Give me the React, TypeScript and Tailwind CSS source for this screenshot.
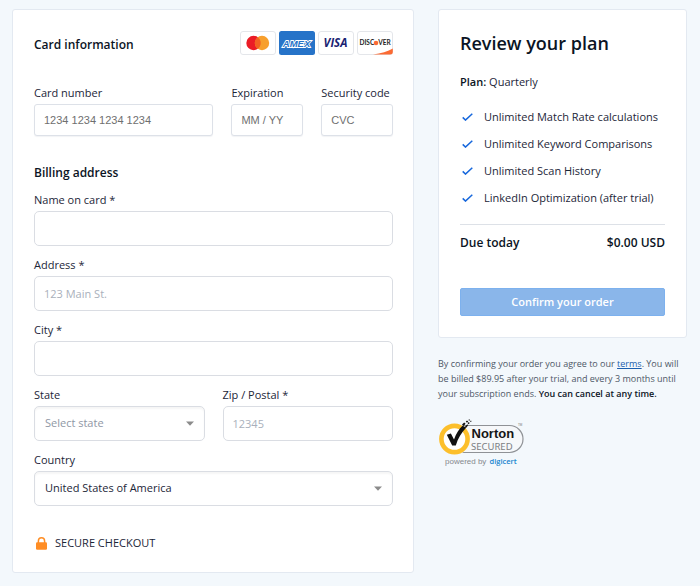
import { useState, type FormEvent, type ReactNode } from 'react';

/**
 * Checkout page: card + billing form on the left, plan summary on the right.
 */

const FEATURES = [
  'Unlimited Match Rate calculations',
  'Unlimited Keyword Comparisons',
  'Unlimited Scan History',
  'LinkedIn Optimization (after trial)',
];

const STATES = ['California', 'Florida', 'New York', 'Texas', 'Washington'];
const COUNTRIES = ['United States of America', 'Canada', 'United Kingdom'];

const cardField =
  'h-8 w-full rounded-[3px] border border-[#dde1e8] bg-white px-[9px] font-["Liberation_Sans",Arial,sans-serif] text-[11px] text-[#1c2638] shadow-[0_1px_1px_rgba(30,50,90,0.06)] outline-none placeholder:text-[#6f6f6f] focus:border-[#4a90e2]';
const billingField =
  'h-[35px] w-full rounded-[5px] border border-[#dadde3] bg-white px-[9px] text-[11px] text-[#1c2638] outline-none placeholder:text-[#a9b0bb] focus:border-[#4a90e2]';

function Field({ id, label, children }: { id: string; label: string; children: ReactNode }) {
  return (
    <div className="min-w-0">
      <label htmlFor={id} className="mb-[3px] block text-[11px] leading-4 text-[#1c2638]">
        {label}
      </label>
      {children}
    </div>
  );
}

function SelectField({
  id,
  label,
  value,
  placeholder,
  options,
  onChange,
}: {
  id: string;
  label: string;
  value: string;
  placeholder?: string;
  options: string[];
  onChange: (v: string) => void;
}) {
  return (
    <Field id={id} label={label}>
      <div className="relative">
        <select
          id={id}
          value={value}
          onChange={(e) => onChange(e.target.value)}
          className={`h-[35px] w-full appearance-none rounded-[5px] border border-[#dadde3] bg-white px-[10px] text-[11px] shadow-[inset_0_2px_2px_rgba(0,0,0,0.04)] outline-none focus:border-[#4a90e2] ${
            value ? 'text-[#1c2638]' : 'text-[#8f97a5]'
          }`}
        >
          {placeholder && <option value="">{placeholder}</option>}
          {options.map((o) => (
            <option key={o} value={o}>
              {o}
            </option>
          ))}
        </select>
        <svg
          width="8"
          height="5"
          viewBox="0 0 8 5"
          className="pointer-events-none absolute top-[15px] right-[11px]"
          aria-hidden="true"
        >
          <path d="M0 0.5H8L4 4.7Z" fill="#8b8b8b" />
        </svg>
      </div>
    </Field>
  );
}

function CardBrands() {
  return (
    <div className="flex gap-[3px]">
      <svg width="36" height="24" viewBox="0 0 36 24" role="img" aria-label="Mastercard">
        <rect x="0.5" y="0.5" width="35" height="23" rx="2.5" fill="#fff" stroke="#e4e6ea" />
        <circle cx="13.5" cy="12" r="7.2" fill="#eb1c26" />
        <circle cx="22" cy="12" r="7.2" fill="#f79f2d" />
        <path d="M17.75 6.2A7.2 7.2 0 0 1 17.75 17.8A7.2 7.2 0 0 1 17.75 6.2Z" fill="#f26122" />
      </svg>
      <svg width="36" height="24" viewBox="0 0 36 24" role="img" aria-label="American Express">
        <rect width="36" height="24" rx="2.5" fill="#2673c8" />
        <text
          x="17.5"
          y="15.5"
          textAnchor="middle"
          fontFamily="Liberation Sans, Arial, sans-serif"
          fontSize="9.5"
          fontWeight="700"
          fontStyle="italic"
          fill="#2673c8"
          stroke="#fff"
          strokeWidth="1.8"
          paintOrder="stroke"
        >
          AMEX
        </text>
      </svg>
      <svg width="36" height="24" viewBox="0 0 36 24" role="img" aria-label="Visa">
        <rect x="0.5" y="0.5" width="35" height="23" rx="2.5" fill="#fff" stroke="#e4e6ea" />
        <text
          x="17.5"
          y="16"
          textAnchor="middle"
          fontFamily="Open Sans, sans-serif"
          fontSize="11.5"
          fontWeight="700"
          fontStyle="italic"
          fill="#1a2272"
        >
          VISA
        </text>
      </svg>
      <svg width="36" height="24" viewBox="0 0 36 24" role="img" aria-label="Discover">
        <rect x="0.5" y="0.5" width="35" height="23" rx="2.5" fill="#fff" stroke="#e4e6ea" />
        <path d="M16 23.5C24 22.4 31 20.5 35.8 17.5V21Q35.8 23.5 33 23.5Z" fill="#fb6a33" />
        <g fontFamily="Lato, sans-serif" fontSize="6.5" fontWeight="700" fill="#1d1d1d">
          <text x="2.5" y="14.3">
            DISC
          </text>
          <text x="21.2" y="14.3">
            VER
          </text>
        </g>
        <circle cx="19" cy="12" r="2.3" fill="#fb6a33" />
      </svg>
    </div>
  );
}

function NortonSeal() {
  return (
    <svg width="86" height="48" viewBox="0 0 86 48" role="img" aria-label="Norton Secured, powered by digicert">
      <path
        d="M20 6.5H71.5A13.5 13.5 0 0 1 71.5 33.5H20"
        fill="#f6f8fa"
        stroke="#8f9296"
        strokeWidth="1.2"
      />
      <circle cx="16.5" cy="20" r="15.8" fill="#f3f8fc" />
      <circle cx="16.5" cy="20" r="13.1" fill="#fff" stroke="#fcbf2b" strokeWidth="4.6" />
      <path
        d="M8.8 15.8L12.9 14.6L16 20.4C18.2 14.6 20.8 10.4 24.5 6.8L28.3 8.4C23.4 13.6 20 19 17.8 26.4H14.2Z"
        fill="#111"
      />
      <path
        d="M24 5.6L26.2 3.4L27.6 4.8L25.6 7.1ZM27 7.6L29.4 5.2L30 6.6L28.2 8.8ZM27.8 2.6L29 1.4L30.2 2.6L29 3.8ZM29.6 4L31 3L31.6 4.2L30.4 5.2ZM30.4 1L31.2 0.2L32 1L31.2 1.8ZM32 2.2L33 1.4L33.6 2.3L32.8 3Z"
        fill="#111"
      />
      <text x="33.5" y="19" fontFamily="Liberation Sans, Arial, sans-serif" fontSize="13" fontWeight="700" fill="#151515">
        Norton
      </text>
      <text x="33" y="30.5" fontFamily="Noto Sans, sans-serif" fontSize="9.5" fill="#7b7e82">
        SECURED
      </text>
      <text x="80" y="7" fontFamily="Liberation Sans, Arial, sans-serif" fontSize="3" fill="#777">
        TM
      </text>
      <text x="7" y="44.5" fontFamily="Liberation Sans, Arial, sans-serif" fontSize="8" fill="#85898e">
        powered by
      </text>
      <text x="51.5" y="44.5" fontFamily="Open Sans, sans-serif" fontSize="7.5" fontWeight="600" fill="#1a86cf">
        digicert
      </text>
    </svg>
  );
}

export default function App() {
  const [state, setState] = useState('');
  const [country, setCountry] = useState(COUNTRIES[0]);

  function handleSubmit(e: FormEvent<HTMLFormElement>) {
    e.preventDefault();
  }

  return (
    <main className="min-h-screen bg-[#f3f8fc] font-['Open_Sans','Noto_Sans',sans-serif] text-[#1c2638]">
      <form
        onSubmit={handleSubmit}
        className="grid grid-cols-[minmax(0,1fr)_249px] items-start gap-6 pt-[9px] pr-[13px] pb-[13px] pl-3"
      >
        <section className="rounded-[3px] border border-[#e3e9f1] bg-white pt-[21px] pr-5 pb-5 pl-[21px]">
          <div className="flex items-end justify-between">
            <h2 className="text-[12px] leading-5 font-semibold text-[#0b1424]">Card information</h2>
            <CardBrands />
          </div>

          <div className="mt-[30px] grid grid-cols-[minmax(0,5fr)_minmax(0,2fr)_minmax(0,2fr)] gap-[18px]">
            <Field id="card" label="Card number">
              <input id="card" type="text" placeholder="1234 1234 1234 1234" className={cardField} />
            </Field>
            <Field id="exp" label="Expiration">
              <input id="exp" type="text" placeholder="MM / YY" className={cardField} />
            </Field>
            <Field id="cvc" label="Security code">
              <input id="cvc" type="text" placeholder="CVC" className={cardField} />
            </Field>
          </div>

          <h2 className="mt-[27px] text-[12px] leading-5 font-semibold text-[#0b1424]">Billing address</h2>

          <div className="mt-[9px] flex flex-col gap-[11px]">
            <Field id="name" label="Name on card *">
              <input id="name" type="text" className={billingField} />
            </Field>
            <Field id="address" label="Address *">
              <input id="address" type="text" placeholder="123 Main St." className={billingField} />
            </Field>
            <Field id="city" label="City *">
              <input id="city" type="text" className={billingField} />
            </Field>
            <div className="grid grid-cols-2 gap-[18px]">
              <SelectField
                id="state"
                label="State"
                value={state}
                placeholder="Select state"
                options={STATES}
                onChange={setState}
              />
              <Field id="zip" label="Zip / Postal *">
                <input id="zip" type="text" placeholder="12345" className={billingField} />
              </Field>
            </div>
            <SelectField id="country" label="Country" value={country} options={COUNTRIES} onChange={setCountry} />
          </div>

          <div className="mt-7 flex items-center gap-2 pl-[2px] text-[11px] leading-[18px]">
            <svg width="11" height="13" viewBox="0 0 11 13" aria-hidden="true">
              <path d="M2.4 6V3.9A3.1 3.1 0 0 1 8.6 3.9V6" fill="none" stroke="#ff8d24" strokeWidth="1.5" />
              <rect y="5.3" width="11" height="7.4" rx="1.2" fill="#ff8d24" />
            </svg>
            SECURE CHECKOUT
          </div>
        </section>

        <aside>
          <section className="rounded-[3px] border border-[#e3e9f1] bg-white px-[21px] pt-[19px] pb-[21px]">
            <h1 className="text-[18px] leading-7 font-semibold text-[#0b1424]">Review your plan</h1>
            <p className="mt-[17px] text-[11px] leading-4">
              <span className="font-semibold text-[#0b1424]">Plan:</span> Quarterly
            </p>

            <ul className="mt-[19px] flex flex-col gap-[11px] text-[11px] leading-4">
              {FEATURES.map((f) => (
                <li key={f} className="flex items-center gap-[11px] pl-[2px]">
                  <svg width="11" height="8" viewBox="0 0 11 8" fill="none" aria-hidden="true">
                    <path d="M0.7 4.4L3.5 7.1L10.3 0.8" stroke="#1667dc" strokeWidth="1.5" />
                  </svg>
                  {f}
                </li>
              ))}
            </ul>

            <div className="mt-[18px] flex justify-between border-t border-[#dde1e7] pt-2 text-[12px] leading-5 font-semibold text-[#0b1424]">
              <span>Due today</span>
              <span>$0.00 USD</span>
            </div>

            <button
              type="submit"
              className="mt-[35px] h-7 w-full rounded-[2px] border border-[#7db1ee] bg-[#8ab6ea] text-[11px] font-semibold text-white"
            >
              Confirm your order
            </button>
          </section>

          <p className="mt-[18px] text-[9px] leading-[15px] text-[#4d5766]">
            By confirming your order you agree to our{' '}
            <a href="#terms" className="text-[#1c5fae] underline">
              terms
            </a>
            . You will be billed $89.95 after your trial, and every 3 months until your subscription ends.{' '}
            <strong className="font-semibold text-[#0b1424]">You can cancel at any time.</strong>
          </p>

          <div className="mt-[18px]">
            <NortonSeal />
          </div>
        </aside>
      </form>
    </main>
  );
}
